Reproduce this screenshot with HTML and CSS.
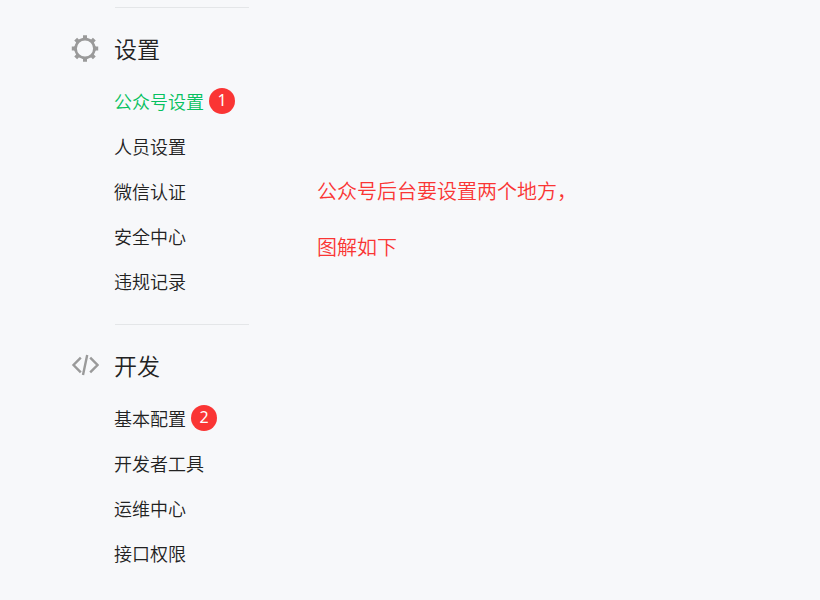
FILE: index.html
```html
<!DOCTYPE html>
<html lang="zh-CN">
<head>
<meta charset="utf-8">
<meta name="viewport" content="width=device-width, initial-scale=1">
<title>公众号设置</title>
<link rel="stylesheet" href="styles.css">
</head>
<body>
<div class="page">
  <nav class="sidebar">
    <section class="group">
      <h2 class="group-title">
        <svg class="icon" viewBox="0 0 28 28" aria-hidden="true">
          <circle cx="14" cy="14.500" r="9.400" fill="none" stroke="#9a9a9a" stroke-width="2.600"/>
          <g fill="#9a9a9a">
            <path id="tooth" d="M12 1.300h4v2.400l1.500 2h-7l1.500-2z"/>
            <use href="#tooth" transform="rotate(45 14 14.500)"/>
            <use href="#tooth" transform="rotate(90 14 14.500)"/>
            <use href="#tooth" transform="rotate(135 14 14.500)"/>
            <use href="#tooth" transform="rotate(180 14 14.500)"/>
            <use href="#tooth" transform="rotate(225 14 14.500)"/>
            <use href="#tooth" transform="rotate(270 14 14.500)"/>
            <use href="#tooth" transform="rotate(315 14 14.500)"/>
          </g>
        </svg>
        设置
      </h2>
      <ul class="links">
        <li><a class="active" href="#account">公众号设置</a><span class="badge">1</span></li>
        <li><a href="#staff">人员设置</a></li>
        <li><a href="#verify">微信认证</a></li>
        <li><a href="#security">安全中心</a></li>
        <li><a href="#violations">违规记录</a></li>
      </ul>
    </section>
    <section class="group">
      <h2 class="group-title">
        <svg class="icon" viewBox="0 0 28 28" aria-hidden="true">
          <path d="M9.800 6.600L2.500 14l7.300 7.400M19.200 6.600l7.300 7.400-7.300 7.400M16.200 4l-4.200 20" fill="none" stroke="#9a9a9a" stroke-width="2.400"/>
        </svg>
        开发
      </h2>
      <ul class="links">
        <li><a href="#config">基本配置</a><span class="badge">2</span></li>
        <li><a href="#tools">开发者工具</a></li>
        <li><a href="#ops">运维中心</a></li>
        <li><a href="#api">接口权限</a></li>
      </ul>
    </section>
  </nav>
  <main class="note">
    <p>公众号后台要设置两个地方，</p>
    <p>图解如下</p>
  </main>
</div>
</body>
</html>
```
FILE: styles.css
```css
* {
  box-sizing: border-box;
}

body {
  margin: 0;
  background: #f7f8fa;
  color: #222;
  font-family: "Noto Sans CJK SC", sans-serif;
  font-weight: 350;
}

.page {
  display: flex;
  gap: 68px;
  padding: 7px 20px 0 71px;
}

.sidebar {
  flex: none;
}

.group {
  padding-bottom: 21px;
}

.group::before {
  content: "";
  display: block;
  width: 134px;
  height: 1px;
  margin-left: 44px;
  background: #e4e6e8;
}

.group-title {
  display: flex;
  align-items: center;
  gap: 15px;
  height: 80px;
  margin: 0;
  font-size: 23px;
  font-weight: inherit;
}

.icon {
  width: 28px;
  height: 28px;
}

.links {
  margin: -10px 0 0 43px;
  padding: 0;
  list-style: none;
}

.links li {
  display: flex;
  align-items: center;
  gap: 5px;
  height: 45px;
  font-size: 18px;
}

.links a {
  color: inherit;
  text-decoration: none;
}

.links .active {
  color: #07c160;
}

.badge {
  width: 26px;
  height: 26px;
  border-radius: 50%;
  background: #fa3534;
  color: #fff;
  font-family: "Noto Sans", sans-serif;
  font-size: 16px;
  font-weight: 400;
  line-height: 24px;
  text-align: center;
}

.note {
  padding-top: 156px;
  color: #fa3534;
  font-size: 20px;
  line-height: 56px;
}

.note p {
  margin: 0;
}
```
